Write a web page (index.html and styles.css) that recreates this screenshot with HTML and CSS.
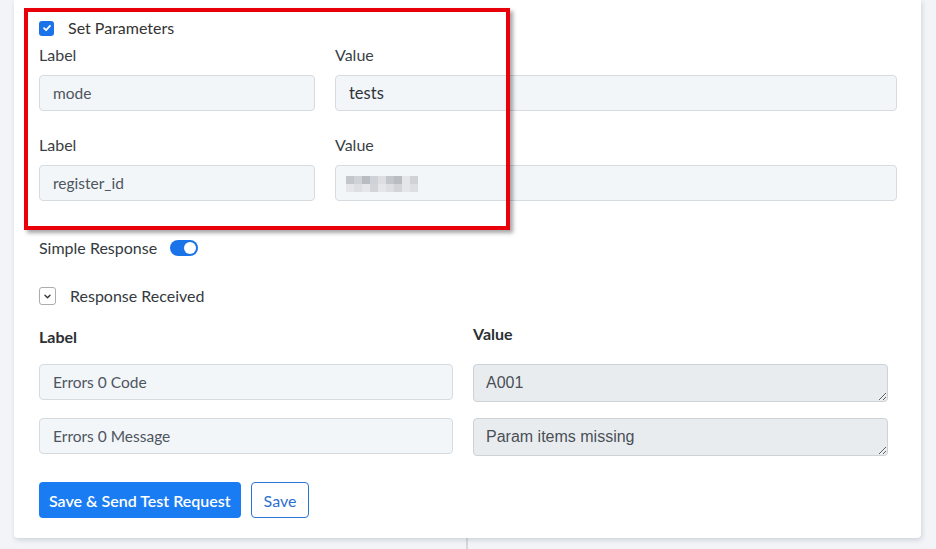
FILE: index.html
```html
<!DOCTYPE html>
<html lang="en">

<head>
  <meta charset="UTF-8">
  <meta name="viewport" content="width=device-width, initial-scale=1.0">
  <title>Set Parameters</title>
  <link rel="stylesheet" href="styles.css">
</head>

<body>
  <div class="card">
    <!-- highlight around the parameters block -->
    <div class="highlight"></div>

    <div class="check-row">
      <span class="checkbox">
        <svg width="10" height="10" viewBox="0 0 10 10">
          <path d="M2 5.2 L4.1 7.2 L8 2.8" fill="none" stroke="#fff" stroke-width="1.8" stroke-linecap="round" stroke-linejoin="round" />
        </svg>
      </span>
      <span>Set Parameters</span>
    </div>

    <div class="params">
      <label class="field-label">Label</label>
      <label class="field-label">Value</label>
      <input class="field" type="text" value="mode" readonly>
      <input class="field field-dark" type="text" value="tests" readonly>

      <label class="field-label second">Label</label>
      <label class="field-label second">Value</label>
      <input class="field" type="text" value="register_id" readonly>
      <div class="field">
        <span class="mosaic">
          <i class="m1"></i><i class="m2"></i><i class="m3"></i><i class="m2"></i><i class="m4"></i><i class="m1"></i><i class="m3"></i><i class="m5"></i><i class="m2"></i>
          <i class="m5"></i><i class="m4"></i><i class="m5"></i><i class="m6"></i><i class="m5"></i><i class="m4"></i><i class="m6"></i><i class="m5"></i><i class="m4"></i>
        </span>
      </div>
    </div>

    <div class="switch-row">
      <span>Simple Response</span>
      <span class="switch"><span class="knob"></span></span>
    </div>

    <div class="collapse-row">
      <span class="chevron">
        <svg width="9" height="9" viewBox="0 0 10 10">
          <path d="M2.2 3.6 L5 6.4 L7.8 3.6" fill="none" stroke="#333" stroke-width="1.5" stroke-linecap="round" stroke-linejoin="round" />
        </svg>
      </span>
      <span>Response Received</span>
    </div>

    <div class="response">
      <div class="head head-label">Label</div>
      <div class="head">Value</div>

      <input class="field" type="text" value="Errors 0 Code" readonly>
      <textarea class="result" readonly>A001</textarea>

      <input class="field" type="text" value="Errors 0 Message" readonly>
      <textarea class="result" readonly>Param items missing</textarea>
    </div>

    <div class="actions">
      <button type="button" class="btn btn-primary">Save &amp; Send Test Request</button>
      <button type="button" class="btn btn-outline">Save</button>
    </div>
  </div>
  <div class="divider"></div>
</body>

</html>
```

FILE: styles.css
```css
* {
  margin: 0;
  padding: 0;
  box-sizing: border-box;

  font-family: Lato, "Open Sans", sans-serif;
}

body {
  background-color: #f2f4f7;
  color: #343a40;
  font-size: 16px;
  line-height: 20px;
  overflow: hidden;
}

.card {
  position: relative;

  width: 907px;
  margin-left: 14px;
  padding: 18px 24px 20px 25px;

  background-color: #fff;
  border-radius: 0 0 4px 4px;
  box-shadow: 1px 2px 5px rgba(40, 60, 90, 0.18);
}

.highlight {
  position: absolute;
  left: 10px;
  top: 8px;

  width: 486px;
  height: 222px;

  border: 4px solid #e8000b;
  box-shadow: 3px 3px 4px rgba(0, 0, 0, 0.35);
  pointer-events: none;
}

.check-row {
  display: flex;
  align-items: center;
  gap: 14px;
  color: #333;
}

.checkbox {
  display: flex;
  align-items: center;
  justify-content: center;

  width: 15px;
  height: 15px;
  border-radius: 3px;
  background-color: #1a73e8;
}

.params {
  display: grid;
  grid-template-columns: 276px 562px;
  column-gap: 20px;
  margin-top: 7px;
}

.field-label {
  display: block;
  margin-bottom: 10px;
  color: #3a3f45;
}

.field-label.second {
  margin-top: 24px;
}

.field {
  display: flex;
  align-items: center;

  width: 100%;
  height: 36px;
  padding: 0 13px;

  border: 1px solid #d6dbe0;
  border-radius: 4px;
  outline: none;

  background-color: #f3f6f9;
  color: #4d5560;
  font-size: 15.5px;
}

.field-dark {
  color: #2f343a;
  font-size: 16.5px;
}

.mosaic {
  display: grid;
  grid-template-columns: repeat(9, 8px);
  grid-auto-rows: 8px;
  margin-left: -3px;
  margin-top: 1px;
  filter: blur(0.4px);
}

.mosaic i {
  display: block;
}

.m1 { background-color: #c3c6ca; }
.m2 { background-color: #cfd2d6; }
.m3 { background-color: #b9bcc0; }
.m4 { background-color: #dcdee1; }
.m5 { background-color: #e4e6e9; }
.m6 { background-color: #d2d4d7; }

.switch-row {
  display: flex;
  align-items: center;
  gap: 13px;
  margin-top: 37px;
}

.switch {
  display: flex;
  align-items: center;
  justify-content: flex-end;

  width: 28px;
  height: 16px;
  padding: 0 2px;
  border-radius: 8px;
  background-color: #1a73e8;
}

.knob {
  width: 12px;
  height: 12px;
  border-radius: 50%;
  background-color: #fff;
}

.collapse-row {
  display: flex;
  align-items: center;
  gap: 14px;
  margin-top: 28px;
}

.chevron {
  display: flex;
  align-items: center;
  justify-content: center;

  width: 17px;
  height: 18px;
  border: 1px solid #a8adb3;
  border-radius: 3px;
}

.response {
  display: grid;
  grid-template-columns: 414px 415px;
  column-gap: 20px;
  row-gap: 16px;
  align-items: start;
  margin-top: 18px;
}

.head {
  font-weight: 700;
  color: #2b2f33;
  margin-bottom: 1px;
}

.head-label {
  margin-top: 3px;
}

.result {
  display: block;
  width: 100%;
  height: 38px;
  padding: 7px 12px;

  border: 1px solid #cdd2d7;
  border-radius: 4px;
  outline: none;

  background-color: #e9ecef;
  color: #495057;
  font-family: "Liberation Sans", Arial, sans-serif;
  font-size: 16px;
  line-height: 22px;
  overflow: hidden;
}

.actions {
  display: flex;
  gap: 10px;
  margin-top: 26px;
}

.btn {
  height: 36px;
  padding: 0 12px;
  border-radius: 4px;

  font-size: 16px;
  font-weight: 600;
  cursor: pointer;
}

.btn-primary {
  padding: 0 10px;
  border: none;
  background-color: #1a7cf2;
  color: #fff;
}

.btn-outline {
  border: 1px solid #2c74d8;
  background-color: #fff;
  color: #2c6fcf;
  font-weight: 400;
}

.divider {
  width: 2px;
  height: 20px;
  margin-left: 466px;
  background-color: #d4d8dd;
}
```
